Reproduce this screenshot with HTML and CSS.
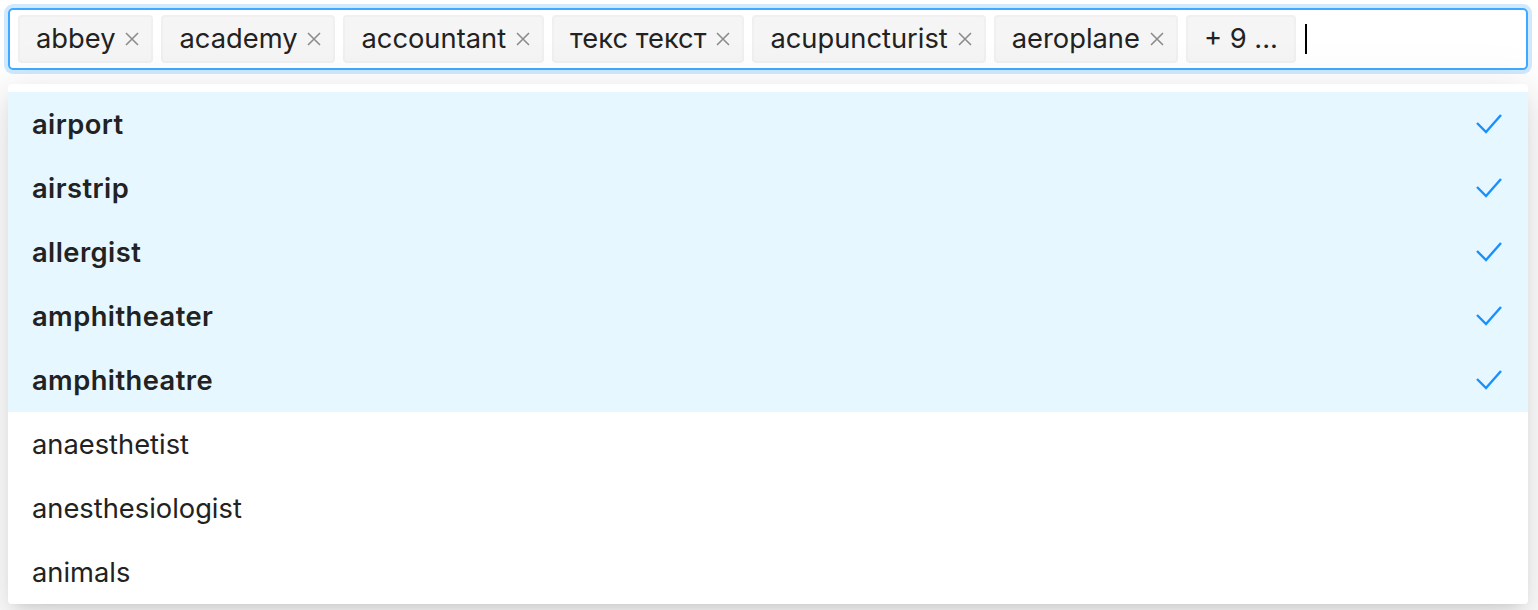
FILE: index.html
```html
<!DOCTYPE html>
<html>
<head>
<meta charset="utf-8">
<link rel="stylesheet" href="styles.css">
</head>
<body>
<div class="select">
  <span class="tag"><span class="tag-text">abbey</span><svg class="tag-x" viewBox="0 0 14 14"><path d="M1 1L13 13M13 1L1 13"/></svg></span>
  <span class="tag"><span class="tag-text">academy</span><svg class="tag-x" viewBox="0 0 14 14"><path d="M1 1L13 13M13 1L1 13"/></svg></span>
  <span class="tag"><span class="tag-text">accountant</span><svg class="tag-x" viewBox="0 0 14 14"><path d="M1 1L13 13M13 1L1 13"/></svg></span>
  <span class="tag"><span class="tag-text">текс текст</span><svg class="tag-x" viewBox="0 0 14 14"><path d="M1 1L13 13M13 1L1 13"/></svg></span>
  <span class="tag"><span class="tag-text">acupuncturist</span><svg class="tag-x" viewBox="0 0 14 14"><path d="M1 1L13 13M13 1L1 13"/></svg></span>
  <span class="tag"><span class="tag-text">aeroplane</span><svg class="tag-x" viewBox="0 0 14 14"><path d="M1 1L13 13M13 1L1 13"/></svg></span>
  <span class="tag tag-more"><span class="tag-text">+ 9 ...</span></span>
  <span class="cursor"></span>
</div>
<div class="dropdown">
  <div class="option selected"><span>airport</span><svg class="check" viewBox="0 0 28 22"><polyline points="2,10 11,19 26,2"/></svg></div>
  <div class="option selected"><span>airstrip</span><svg class="check" viewBox="0 0 28 22"><polyline points="2,10 11,19 26,2"/></svg></div>
  <div class="option selected"><span>allergist</span><svg class="check" viewBox="0 0 28 22"><polyline points="2,10 11,19 26,2"/></svg></div>
  <div class="option selected"><span>amphitheater</span><svg class="check" viewBox="0 0 28 22"><polyline points="2,10 11,19 26,2"/></svg></div>
  <div class="option selected"><span>amphitheatre</span><svg class="check" viewBox="0 0 28 22"><polyline points="2,10 11,19 26,2"/></svg></div>
  <div class="option"><span>anaesthetist</span></div>
  <div class="option"><span>anesthesiologist</span></div>
  <div class="option"><span>animals</span></div>
</div>
</body>
</html>
```
FILE: styles.css
```css
html, body {
  margin: 0;
  padding: 0;
  background: #fff;
}
body {
  padding: 8px;
  font-family: Inter, "Noto Sans", sans-serif;
  font-size: 27.3px;
  color: #222;
  position: relative;
  height: 594px;
  overflow: hidden;
}
.select {
  box-sizing: border-box;
  width: 1520px;
  height: 62px;
  border: 2px solid #40a9ff;
  border-radius: 5px;
  box-shadow: 0 0 0 4px rgba(24, 144, 255, 0.2);
  padding: 2px 8px;
  display: flex;
  align-items: center;
  gap: 8px;
}
.tag {
  box-sizing: border-box;
  height: 48px;
  display: flex;
  align-items: center;
  background: #f5f5f5;
  border: 2px solid #f0f0f0;
  border-radius: 4px;
  padding: 0 12px 0 16px;
}
.tag-more {
  padding: 0 16px;
}
.tag-text {
  line-height: 44px;
  white-space: nowrap;
}
.tag-x {
  width: 14px;
  height: 14px;
  margin-left: 10px;
  fill: none;
  stroke: #8c8c8c;
  stroke-width: 1.6;
}
.cursor {
  width: 2px;
  height: 30px;
  background: #000;
  margin-left: 1px;
}
.dropdown {
  position: absolute;
  top: 84px;
  left: 8px;
  width: 1520px;
  box-sizing: border-box;
  padding: 8px 0 0;
  background: #fff;
  border-radius: 4px;
  box-shadow: 0 6px 12px -8px rgba(0, 0, 0, 0.16), 0 12px 32px 0 rgba(0, 0, 0, 0.09), 0 18px 56px 16px rgba(0, 0, 0, 0.06);
}
.option {
  height: 64px;
  display: flex;
  align-items: center;
  justify-content: space-between;
  padding: 0 25px 0 24px;
}
.option.selected {
  background: #e6f7ff;
  font-weight: 600;
  letter-spacing: 0.45px;
}
.check {
  width: 28px;
  height: 22px;
  fill: none;
  stroke: #1890ff;
  stroke-width: 2.4;
}
```
